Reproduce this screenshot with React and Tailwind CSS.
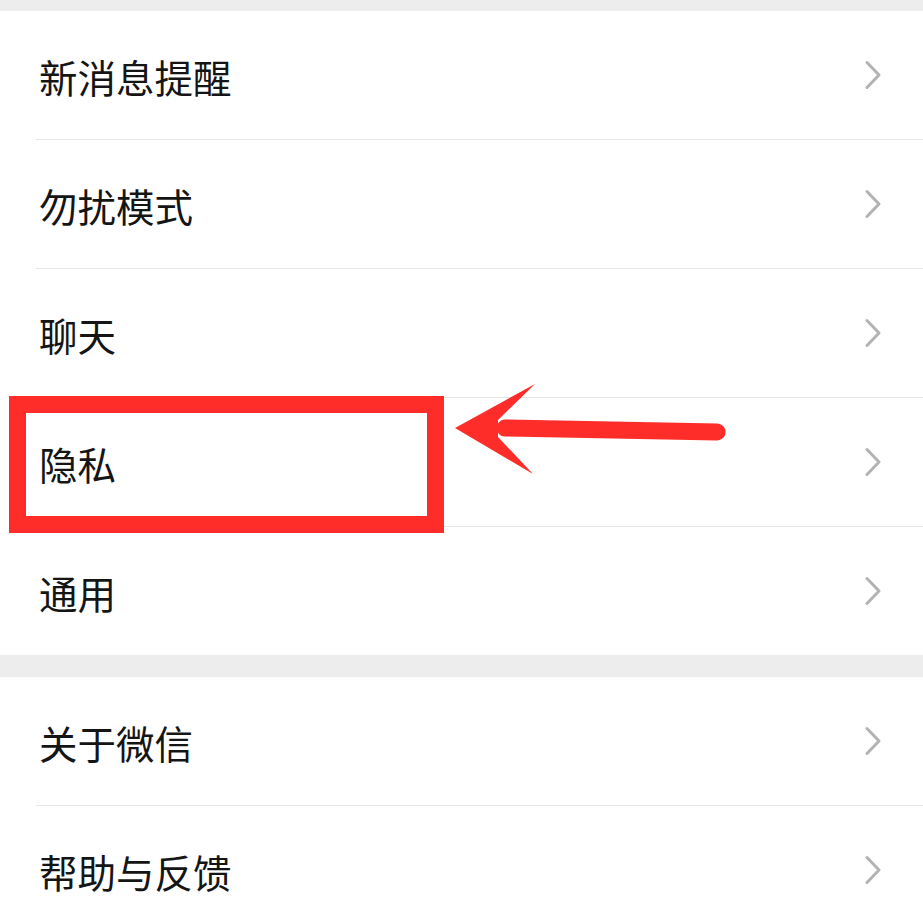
import React from 'react'

const groups = [
  ['新消息提醒', '勿扰模式', '聊天', '隐私', '通用'],
  ['关于微信', '帮助与反馈'],
]

function Chevron() {
  return (
    <svg width="18" height="30" viewBox="0 0 18 30" fill="none">
      <path d="M3 2.5 L15 15 L3 27.5" stroke="#b3b3b3" strokeWidth="3" strokeLinecap="round" strokeLinejoin="round" />
    </svg>
  )
}

function Row({ label, last }) {
  return (
    <div className="flex flex-col">
      <div className="flex h-[128px] items-center justify-between pl-[39px] pr-[41px]">
        <span className="pt-[2px] text-[38.5px] leading-none text-[#151515]">{label}</span>
        <Chevron />
      </div>
      {!last && <div className="ml-[36px] h-px bg-[#e6e6e6]" />}
    </div>
  )
}

export default function App() {
  return (
    <div
      className="relative h-[923px] w-[923px] overflow-hidden bg-white"
      style={{ fontFamily: '"Noto Sans CJK SC", "Noto Sans", sans-serif' }}
    >
      <div className="h-[11px] bg-[#ededed]" />
      {groups.map((items, gi) => (
        <div key={gi} className="flex flex-col">
          {gi > 0 && <div className="h-[22px] bg-[#ededed]" />}
          {items.map((label, i) => (
            <Row key={label} label={label} last={i === items.length - 1} />
          ))}
        </div>
      ))}

      {/* annotation overlay */}
      <div className="absolute left-[9px] top-[396px] h-[137px] w-[435px] border-[17px] border-[#ff2d2a]" />
      <svg className="absolute left-0 top-0" width="923" height="923" viewBox="0 0 923 923">
        <line x1="505" y1="428" x2="717" y2="432" stroke="#ff2d2a" strokeWidth="17" strokeLinecap="round" />
        <polygon points="455,428 535,384 498,420 498,437 533,474" fill="#ff2d2a" />
      </svg>
    </div>
  )
}
